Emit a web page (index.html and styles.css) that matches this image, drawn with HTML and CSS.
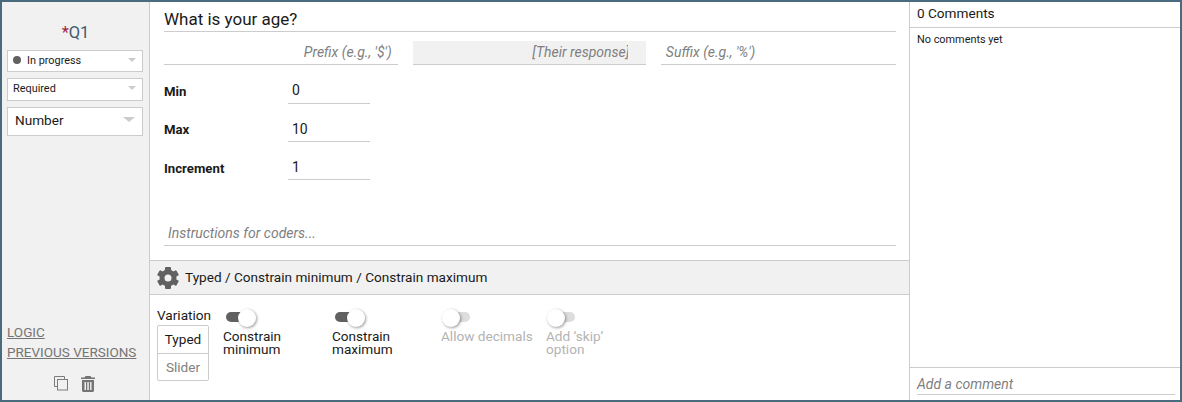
FILE: index.html
```html
<!DOCTYPE html>
<html>
<head>
    <link rel="stylesheet" href="styles.css">
</head>
<body>
    <div class="question">
        <div class="side">
            <div class="qname"><span class="star">*</span>Q1</div>
            <div class="pick small"><span class="dot"></span>In progress<span class="arrow"></span></div>
            <div class="pick small req">Required<span class="arrow"></span></div>
            <div class="pick big">Number<span class="arrow"></span></div>
            <div class="side-links">
                <a href="#">LOGIC</a>
                <a href="#">PREVIOUS VERSIONS</a>
            </div>
            <div class="side-icons">
                <svg width="15" height="15" viewBox="0 0 15 15" fill="none" stroke="#7c7c7c">
                    <path d="M3.500 10.500H.5V.5H10.500V3.500"/>
                    <rect x="3.500" y="3.500" width="10" height="10.500"/>
                </svg>
                <svg width="14" height="16" viewBox="0 0 14 16" fill="#757575">
                    <path d="M4.500 0h5l1 1.500H14V3H0V1.500h3.500z"/>
                    <path d="M1 4h12v10.500c0 .8-.7 1.500-1.500 1.500h-9C1.700 16 1 15.300 1 14.500zm2.500 2v8H5V6zm2.800 0v8h1.500V6zm2.800 0v8h1.400V6z" fill-rule="evenodd"/>
                </svg>
            </div>
        </div>

        <div class="main">
            <div class="editor">
                <div class="title">What is your age?</div>
                <div class="affix-row">
                    <div class="affix prefix">Prefix (e.g., '$')</div>
                    <div class="affix response"><span class="response-text">[Their response]</span></div>
                    <div class="affix suffix">Suffix (e.g., '%')</div>
                </div>
                <div class="num-row"><label>Min</label><div class="num-input">0</div></div>
                <div class="num-row"><label>Max</label><div class="num-input">10</div></div>
                <div class="num-row"><label>Increment</label><div class="num-input">1</div></div>
                <div class="instructions">Instructions for coders...</div>
            </div>
            <div class="settings-bar">
                <svg width="22" height="22" viewBox="0 0 22 22" fill="#616161">
                    <circle cx="11" cy="11" r="6" fill="none" stroke="#616161" stroke-width="5"/>
                    <rect x="8" y="0" width="6" height="5" rx="1"/>
                    <rect x="8" y="0" width="6" height="5" rx="1" transform="rotate(60 11 11)"/>
                    <rect x="8" y="0" width="6" height="5" rx="1" transform="rotate(120 11 11)"/>
                    <rect x="8" y="0" width="6" height="5" rx="1" transform="rotate(180 11 11)"/>
                    <rect x="8" y="0" width="6" height="5" rx="1" transform="rotate(240 11 11)"/>
                    <rect x="8" y="0" width="6" height="5" rx="1" transform="rotate(300 11 11)"/>
                </svg>
                <span class="settings-text">Typed / Constrain minimum / Constrain maximum</span>
            </div>
            <div class="options">
                <div class="variation">
                    <div class="variation-label">Variation</div>
                    <div class="seg">
                        <div class="seg-item">Typed</div>
                        <div class="seg-item off">Slider</div>
                    </div>
                </div>
                <div class="toggle t-min">
                    <div class="switch on"><span class="knob"></span></div>
                    <div class="toggle-label">Constrain<br>minimum</div>
                </div>
                <div class="toggle t-max">
                    <div class="switch on"><span class="knob"></span></div>
                    <div class="toggle-label">Constrain<br>maximum</div>
                </div>
                <div class="toggle t-dec disabled">
                    <div class="switch"><span class="knob"></span></div>
                    <div class="toggle-label">Allow decimals</div>
                </div>
                <div class="toggle t-skip disabled">
                    <div class="switch"><span class="knob"></span></div>
                    <div class="toggle-label">Add ‘skip’<br>option</div>
                </div>
            </div>
        </div>

        <div class="comments">
            <div class="comments-head">0 Comments</div>
            <div class="comments-body">No comments yet</div>
            <div class="comments-foot"><div class="add-comment">Add a comment</div></div>
        </div>
    </div>
</body>
</html>
```

FILE: styles.css
```css
*
{
    box-sizing: border-box;
}
html, body
{
    margin: 0;
    padding: 0;
}
body
{
    font-family: Roboto, "Liberation Sans", sans-serif;
    color: #1a1a1a;
    background-color: white;
}
.question
{
    display: flex;
    width: 1182px;
    height: 402px;
    border: 2px solid #4a6a7e;
    overflow: hidden;
}

/* left column */
.side
{
    display: flex;
    flex-direction: column;
    width: 148px;
    flex: none;
    padding: 0 5px;
    background-color: #f1f1f1;
    border-right: 1px solid #ccc;
}
.qname
{
    margin-top: 20px;
    height: 28px;
    line-height: 22px;
    text-align: center;
    font-size: 16.500px;
    color: #3f5a6d;
}
.star
{
    color: #a3243c;
}
.pick
{
    display: flex;
    align-items: center;
    position: relative;
    width: 136px;
    background-color: white;
    border: 1px solid #ccc;
}
.pick.small
{
    height: 22px;
    font-size: 10.880px;
    padding-left: 5px;
    padding-bottom: 2px;
    margin-bottom: 6px;
}
.pick.req
{
    height: 23px;
    padding-bottom: 2px;
}
.pick.big
{
    height: 29px;
    font-size: 13.600px;
    padding-left: 7px;
    padding-bottom: 3px;
}
.dot
{
    width: 8px;
    height: 8px;
    margin-right: 6px;
    border-radius: 50%;
    background-color: #616161;
}
.arrow
{
    position: absolute;
    right: 6px;
    top: 7px;
    border-left: 4px solid transparent;
    border-right: 4px solid transparent;
    border-top: 4px solid #ccc;
}
.pick.big .arrow
{
    right: 7px;
    top: 9px;
    border-left-width: 6px;
    border-right-width: 6px;
    border-top-width: 5px;
}
.side-links
{
    margin-top: auto;
    display: flex;
    flex-direction: column;
}
.side-links a
{
    font-size: 13.500px;
    line-height: 20px;
    color: #757575;
    text-decoration: underline;
}
.side-icons
{
    display: flex;
    justify-content: center;
    align-items: flex-start;
    gap: 12px;
    padding: 14px 0 8px;
    margin-left: -2px;
}

/* middle column */
.main
{
    display: flex;
    flex-direction: column;
    flex: 1;
    min-width: 0;
    border-right: 1px solid #ccc;
}
.editor
{
    height: 259px;
    padding: 0 13px 0 14px;
    border-bottom: 1px solid #ccc;
}
.title
{
    height: 30px;
    padding-top: 7px;
    line-height: 20px;
    font-size: 17px;
    border-bottom: 1px solid #ccc;
}
.affix-row
{
    display: flex;
    gap: 15px;
    margin-top: 9px;
}
.affix
{
    width: 234px;
    height: 24px;
    padding-right: 6px;
    line-height: 23px;
    font-size: 14px;
    font-style: italic;
    text-align: right;
    color: #808080;
    border-bottom: 1px solid #ccc;
}
.affix.response
{
    padding-right: 18px;
    background-color: #f1f1f1;
}
.response-text
{
    display: inline-block;
    width: 96px;
    overflow: hidden;
    white-space: nowrap;
    text-align: left;
    vertical-align: top;
}
.affix.suffix
{
    padding: 0 0 0 4.500px;
    text-align: left;
    width: 235px;
}
.num-row
{
    display: flex;
    align-items: center;
    height: 28px;
    margin-bottom: 10px;
}
.affix-row + .num-row
{
    margin-top: 11px;
}
.num-row label
{
    width: 124px;
    padding-top: 2px;
    font-size: 13.200px;
    font-weight: 700;
}
.num-row:nth-child(5) label
{
    padding-top: 4px;
}
.num-input
{
    width: 82px;
    height: 28px;
    padding-left: 4px;
    line-height: 28px;
    font-size: 14px;
    border-bottom: 1px solid #ccc;
}
.num-row + .num-row .num-input
{
    line-height: 30px;
}
.instructions
{
    margin-top: 40px;
    height: 26px;
    padding-left: 4px;
    line-height: 26px;
    font-size: 14px;
    font-style: italic;
    color: #808080;
    border-bottom: 1px solid #ccc;
}
.settings-bar
{
    display: flex;
    align-items: center;
    gap: 6px;
    height: 34px;
    padding-left: 7px;
    font-size: 13.600px;
    background-color: #f1f1f1;
    border-bottom: 1px solid #ccc;
}
.settings-text
{
    line-height: 16px;
    margin-bottom: 2px;
}
.options
{
    display: flex;
    flex: 1;
    padding: 11px 0 0 7px;
}
.variation
{
    width: 52px;
    flex: none;
}
.variation-label
{
    height: 19px;
    line-height: 18px;
    font-size: 13.600px;
    white-space: nowrap;
}
.seg
{
    width: 52px;
    border: 1px solid #ccc;
    border-radius: 2px;
}
.seg-item
{
    height: 27px;
    line-height: 27px;
    text-align: center;
    font-size: 13.600px;
}
.seg-item.off
{
    line-height: 26px;
    color: #808080;
    border-top: 1px solid #ccc;
}
.toggle
{
    flex: none;
    font-size: 13.600px;
}
.t-min { width: 109px; margin-left: 14px; }
.t-max { width: 109px; }
.t-dec { width: 105px; }
.t-skip { width: 100px; }
.switch
{
    position: relative;
    width: 26px;
    height: 10px;
    margin: 6px 0 7px 3px;
    border-radius: 5px;
    background-color: #616161;
}
.knob
{
    position: absolute;
    top: -3px;
    left: -2px;
    width: 18px;
    height: 18px;
    border-radius: 50%;
    background-color: white;
    box-shadow: 1px 1px 3px rgba(0, 0, 0, 0.4);
}
.switch.on .knob
{
    left: 12px;
}
.toggle.disabled .switch
{
    background-color: #ddd;
}
.toggle-label
{
    line-height: 13px;
    padding-top: 1px;
}
.toggle.disabled .toggle-label
{
    color: #b3b3b3;
}

/* comments */
.comments
{
    display: flex;
    flex-direction: column;
    flex: none;
    width: 270px;
}
.comments-head
{
    height: 26px;
    padding: 3px 0 0 7px;
    line-height: 16px;
    font-size: 13.600px;
    border-bottom: 1px solid #ccc;
}
.comments-body
{
    flex: 1;
    padding: 5px 0 0 7px;
    line-height: 14px;
    font-size: 10.880px;
}
.comments-foot
{
    height: 33px;
    padding: 0 5px 0 7px;
    border-top: 1px solid #ccc;
}
.add-comment
{
    height: 27px;
    line-height: 32px;
    font-size: 14px;
    font-style: italic;
    color: #808080;
    border-bottom: 1px solid #ccc;
}
```
